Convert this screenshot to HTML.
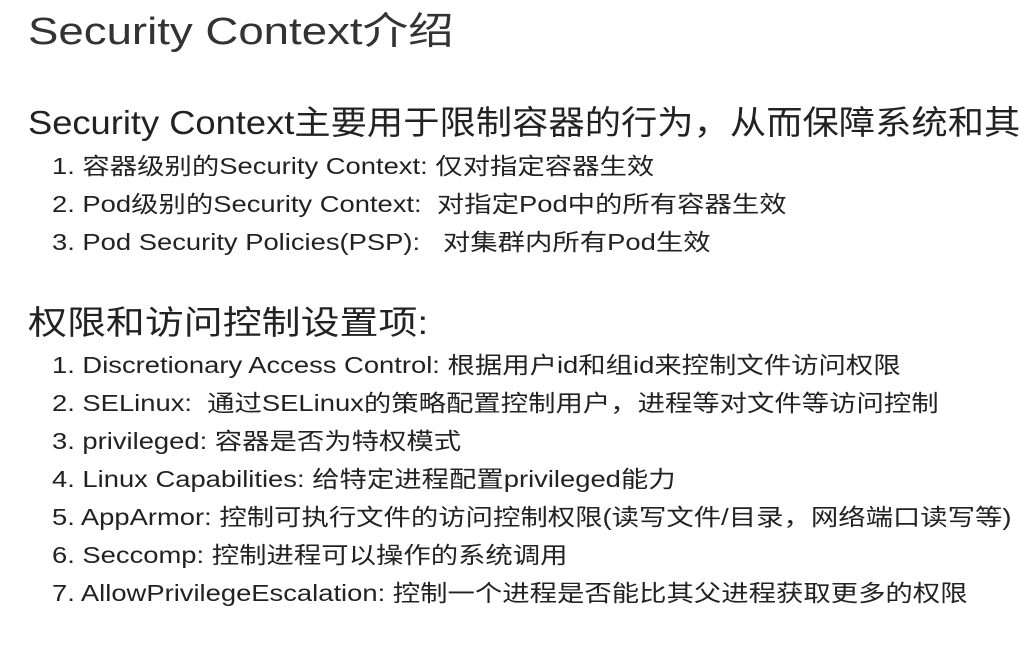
<!DOCTYPE html>
<html><head><meta charset="utf-8"><style>
html,body{margin:0;padding:0;background:#fff;width:1019px;height:659px;overflow:hidden}
body{position:relative;font-family:"Liberation Sans","Noto Sans CJK SC",sans-serif;color:#222}
div{position:absolute;white-space:nowrap;line-height:1;transform-origin:0 0}
.t{left:28px;font-size:38px;color:#333;transform:scaleX(1.2)}
.h{left:28px;font-size:33px;color:#222}
.i{left:52px;font-size:23px;color:#222;transform:scaleX(1.19)}
</style></head><body>
<div class="t" style="top:13px">Security Context介绍</div>
<div class="h" style="top:106px;transform:scaleX(1.1)">Security Context主要用于限制容器的行为，从而保障系统和其</div>
<div class="i" style="top:155px">1. 容器级别的Security Context: 仅对指定容器生效</div>
<div class="i" style="top:193px">2. Pod级别的Security Context:&nbsp; 对指定Pod中的所有容器生效</div>
<div class="i" style="top:231px">3. Pod Security Policies(PSP):&nbsp;&nbsp; 对集群内所有Pod生效</div>
<div class="h" style="top:306px;transform:scaleX(1.18)">权限和访问控制设置项:</div>
<div class="i" style="top:354px">1. Discretionary Access Control: 根据用户id和组id来控制文件访问权限</div>
<div class="i" style="top:392px">2. SELinux:&nbsp; 通过SELinux的策略配置控制用户，进程等对文件等访问控制</div>
<div class="i" style="top:430px">3. privileged: 容器是否为特权模式</div>
<div class="i" style="top:468px">4. Linux Capabilities: 给特定进程配置privileged能力</div>
<div class="i" style="top:506px">5. AppArmor: 控制可执行文件的访问控制权限(读写文件/目录，网络端口读写等)</div>
<div class="i" style="top:544px">6. Seccomp: 控制进程可以操作的系统调用</div>
<div class="i" style="top:582px">7. AllowPrivilegeEscalation: 控制一个进程是否能比其父进程获取更多的权限</div>
</body></html>
